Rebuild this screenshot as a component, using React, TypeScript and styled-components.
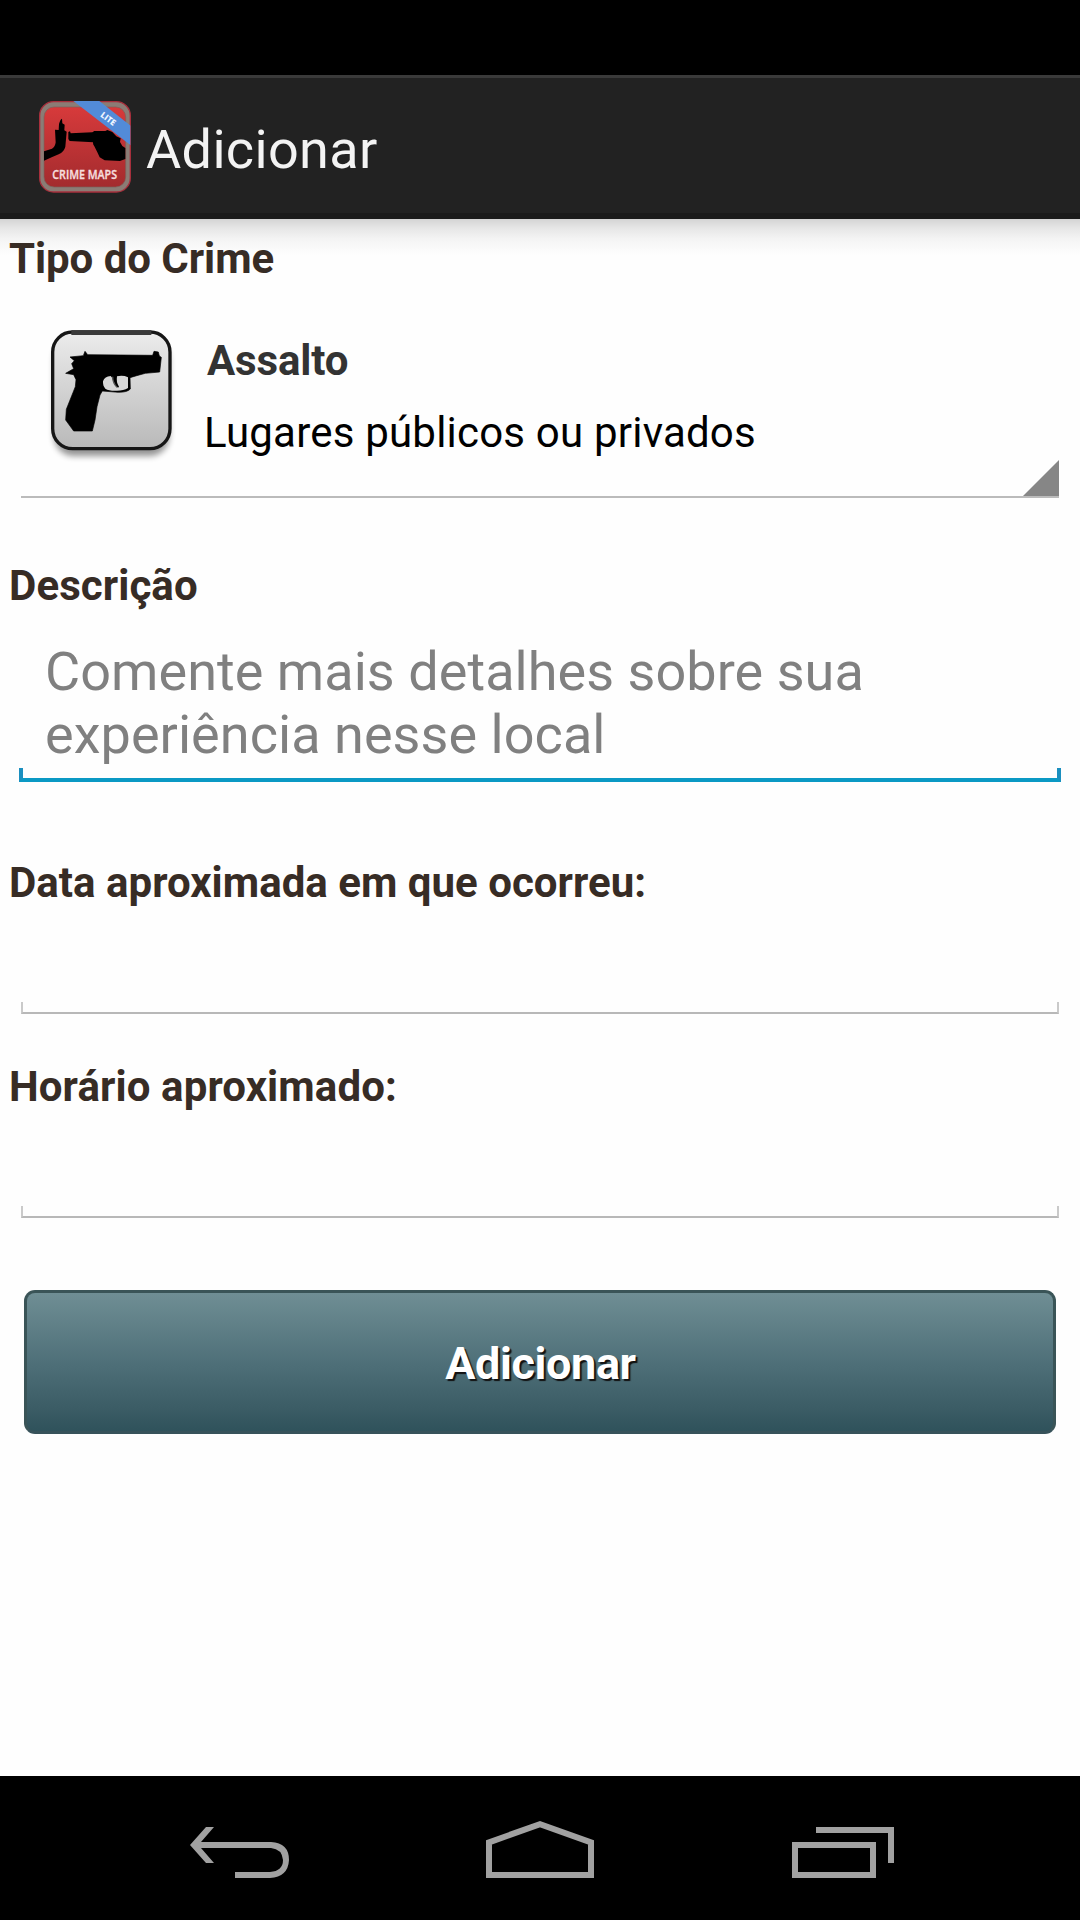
import React from "react";
import styled, { createGlobalStyle } from "styled-components";

const GlobalStyle = createGlobalStyle`
  * { box-sizing: border-box; }
  body { margin: 0; background: #fefefe; font-family: Roboto, "Noto Sans", sans-serif; }
`;

const Screen = styled.div`
  display: flex;
  flex-direction: column;
  width: 1080px;
  height: 1920px;
  overflow: hidden;
  background: #fefefe;
`;

const StatusBar = styled.div`
  height: 75px;
  flex: none;
  background: #000;
`;

const ActionBar = styled.header`
  display: flex;
  align-items: flex-start;
  flex: none;
  height: 144px;
  padding: 14px 0 0 30px;
  background: #222;
  border-top: 3px solid #3a3a3a;
  border-bottom: 6px solid #1b1b1b;
`;

const Title = styled.h1<{ $spacing: number }>`
  margin: 26px 0 0 6px;
  font-size: 54px;
  font-weight: 400;
  line-height: 64px;
  color: #f3f3f3;
  letter-spacing: ${(p) => p.$spacing}px;
`;

const Content = styled.main`
  display: flex;
  flex-direction: column;
  flex: 1;
  padding-top: 15px;
  background: linear-gradient(#d4d4d4 0, #e6e6e6 9px, #f4f4f4 20px, #fefefe 36px);
`;

const Label = styled.label<{ $spacing: number }>`
  height: 50px;
  padding-left: 9px;
  font-size: 42px;
  font-weight: 700;
  line-height: 50px;
  color: #372c25;
  white-space: nowrap;
  letter-spacing: ${(p) => p.$spacing}px;
`;

const Spinner = styled.div`
  display: flex;
  position: relative;
  height: 178px;
  margin: 36px 21px 63px;
  padding-left: 19px;
  border-bottom: 2px solid #bbb;
`;

const SpinnerArrow = styled.svg`
  position: absolute;
  right: 0;
  bottom: 0;
`;

const SpinnerText = styled.div`
  display: flex;
  flex-direction: column;
  gap: 22px;
  padding: 16px 0 0 17px;
`;

const OptionName = styled.strong<{ $spacing: number }>`
  font-size: 42px;
  line-height: 50px;
  color: #333;
  letter-spacing: ${(p) => p.$spacing}px;
`;

const OptionDetail = styled.span<{ $spacing: number }>`
  margin-left: -3px;
  font-size: 42px;
  line-height: 50px;
  color: #000;
  white-space: nowrap;
  letter-spacing: ${(p) => p.$spacing}px;
`;

const Field = styled.div<{ $focused?: boolean }>`
  display: flex;
  flex-direction: column;
  justify-content: flex-end;
  height: ${(p) => (p.$focused ? 171 : 106)}px;
  margin: ${(p) => (p.$focused ? "0 19px 76px" : "0 21px 48px")};
`;

const Hint = styled.p<{ $spacing: number }>`
  margin: 0 0 2px;
  padding-left: 26px;
  font-size: 54px;
  line-height: 63px;
  color: #808080;
  letter-spacing: ${(p) => p.$spacing}px;
`;

const Underline = styled.div<{ $focused?: boolean }>`
  height: ${(p) => (p.$focused ? 14 : 12)}px;
  flex: none;
  border: solid ${(p) => (p.$focused ? "#0b99c4" : "#b8b8b8")};
  border-width: ${(p) => (p.$focused ? "0 4px 4px" : "0 2px 2px")};
  border-left-color: ${(p) => (p.$focused ? "#1b8fbf" : "#cacaca")};
  border-right-color: ${(p) => (p.$focused ? "#1b8fbf" : "#cacaca")};
`;

const SubmitButton = styled.button<{ $spacing: number }>`
  height: 144px;
  margin: 24px 24px 0;
  padding: 3px 0 0 1px;
  border: 3px solid #3a5457;
  border-bottom-color: #37525a;
  border-radius: 11px;
  background: linear-gradient(#6f8e94, #50717a 48%, #3b5c65 84%, #2f525b);
  font: 700 45px/54px Roboto, sans-serif;
  color: #fff;
  text-shadow: 2px 2px 1px #111;
  letter-spacing: ${(p) => p.$spacing}px;
`;

const NavBar = styled.nav`
  display: flex;
  align-items: flex-end;
  justify-content: space-between;
  flex: none;
  height: 144px;
  padding: 0 186px 42px 190px;
  background: #000;
`;

const AppLogo = () => (
  <svg width="110" height="110" viewBox="0 0 330 330">
    <defs>
      <linearGradient id="red" x1="0" y1="0" x2="0" y2="1">
        <stop offset="0" stopColor="#d73a3b" />
        <stop offset="1" stopColor="#a32b2e" />
      </linearGradient>
      <clipPath id="tile">
        <path d="M27 27H302V262Q302 302 262 302H67Q27 302 27 262Z" />
      </clipPath>
    </defs>
    <rect x="29" y="29" width="272" height="271" rx="42" fill="#8b7c75" stroke="#a72f3c" strokeWidth="4" />
    <rect x="42" y="45" width="245" height="240" rx="30" fill="url(#red)" stroke="#78605b" strokeWidth="2" />
    <path d="M42 178L66 170Q76 164 77 151L75 113L86 114L87 96Q91 81 96 80L97 94L104 98L103 115L110 119L106 164Q102 180 86 187L65 196L42 206Z" fill="#000" />
    <path d="M115 120L120 118L122 124L187 121L193 117H226L232 114L247 120L259 133L272 139L270 150L277 162L286 168V201L270 207L224 205L209 196L202 181L193 163L190 151L119 147L115 141Z" fill="#000" />
    <path d="M190 149L192 160Q198 167 205 156L214 148Z" fill="none" stroke="#000" strokeWidth="3" />
    <g clipPath="url(#tile)">
      <path d="M130 27H208L302 101V160Z" fill="#528bd8" />
    </g>
    <text x="209" y="73" transform="rotate(36 209 73)" fontFamily="Open Sans, sans-serif" fontSize="26" fontWeight="800" fill="#eef5ff" textLength="50" lengthAdjust="spacingAndGlyphs">LITE</text>
    <text x="67" y="261" fontFamily="Open Sans, sans-serif" fontSize="35" fontWeight="600" fill="#f6dddd" stroke="#f6dddd" strokeWidth="1" textLength="194" lengthAdjust="spacingAndGlyphs">CRIME MAPS</text>
  </svg>
);

const PistolIcon = () => (
  <svg width="150" height="150" viewBox="0 0 450 450">
    <defs>
      <linearGradient id="steel" x1="0" y1="0" x2="0" y2="1">
        <stop offset="0" stopColor="#ececec" />
        <stop offset="1" stopColor="#b9b9b9" />
      </linearGradient>
      <filter id="soft" x="-20%" y="-20%" width="140%" height="140%">
        <feGaussianBlur stdDeviation="9" />
      </filter>
    </defs>
    <rect x="42" y="60" width="346" height="348" rx="60" fill="#000" opacity="0.42" filter="url(#soft)" />
    <rect x="38" y="36" width="352" height="350" rx="60" fill="url(#steel)" stroke="#161616" strokeWidth="10" />
    <path d="M94 38H334" stroke="#3a3a3a" strokeWidth="14" />
    <path d="M90 111L130 107L135 94L143 104L338 106L342 94L355 96L358 108L364 112L359 156L316 160L290 167L270 173L271 207Q262 217 235 217L187 213L180 225L171 260L165 300L157 333H101L77 300L79 268L106 200L108 179L101 164L77 160L101 146L95 131L103 122Z" fill="#000" stroke="#000" strokeWidth="2" strokeLinejoin="round" />
    <path d="M189 184Q194 169 212 168Q219 174 220 183Q224 196 234 203L237 200Q228 188 231 169Q249 165 264 172L264 204Q251 212 231 212Q207 213 196 206Q188 198 189 184Z" fill="#d8d8d8" />
    <path d="M218 170Q218 188 231 202" fill="none" stroke="#555" strokeWidth="4" />
  </svg>
);

const BackIcon = () => (
  <svg width="99" height="51" viewBox="0 0 99 51">
    <path d="M0 18L16 0H24L11 15H81Q99 16 99 33Q98 50 80 51H45V45H80Q93 44 93 33Q92 22 81 21H11L24 36H16Z" fill="#a1a1a1" />
  </svg>
);

const HomeIcon = () => (
  <svg width="109" height="57" viewBox="0 0 109 57">
    <path d="M3 54V21.3L54 3.2L105 21.3V54Z" fill="none" stroke="#a1a1a1" strokeWidth="6" />
  </svg>
);

const RecentsIcon = () => (
  <svg width="102" height="51" viewBox="0 0 102 51">
    <path d="M3 18H81V48H3ZM24 3H99V36" fill="none" stroke="#a1a1a1" strokeWidth="6" />
  </svg>
);

export default function App() {
  return (
    <>
      <GlobalStyle />
      <Screen>
        <StatusBar />
        <ActionBar>
          <AppLogo />
          <Title $spacing={0.35}>Adicionar</Title>
        </ActionBar>
        <Content>
          <Label $spacing={-0.05}>Tipo do Crime</Label>
          <Spinner>
            <PistolIcon />
            <SpinnerText>
              <OptionName $spacing={-0.15}>Assalto</OptionName>
              <OptionDetail $spacing={0.21}>Lugares públicos ou privados</OptionDetail>
            </SpinnerText>
            <SpinnerArrow width="36" height="36" viewBox="0 0 36 36">
              <path d="M36 0V36H0Z" fill="#868686" />
            </SpinnerArrow>
          </Spinner>
          <Label $spacing={0.08}>Descrição</Label>
          <Field $focused>
            <Hint $spacing={0.05}>
              Comente mais detalhes sobre sua
              <br />
              experiência nesse local
            </Hint>
            <Underline $focused />
          </Field>
          <Label $spacing={0.02}>Data aproximada em que ocorreu:</Label>
          <Field>
            <Underline />
          </Field>
          <Label $spacing={0.11}>Horário aproximado:</Label>
          <Field>
            <Underline />
          </Field>
          <SubmitButton $spacing={-0.4}>Adicionar</SubmitButton>
        </Content>
        <NavBar>
          <BackIcon />
          <HomeIcon />
          <RecentsIcon />
        </NavBar>
      </Screen>
    </>
  );
}
